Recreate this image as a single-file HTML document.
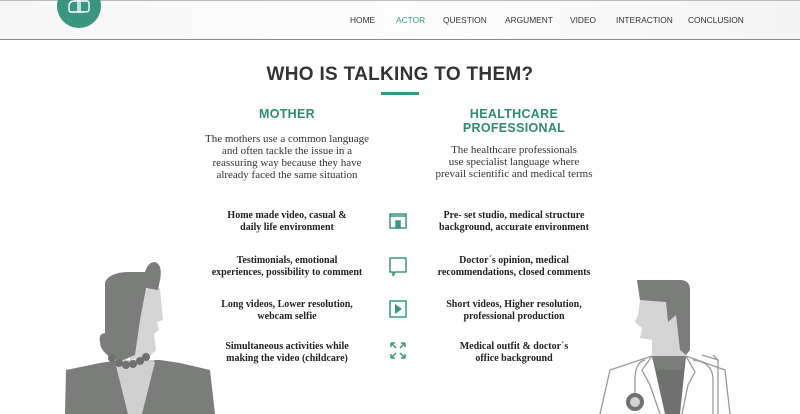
<!DOCTYPE html>
<html><head><meta charset="utf-8"><style>
*{margin:0;padding:0;box-sizing:border-box}
body{width:800px;height:414px;overflow:hidden;background:#fff;position:relative;font-family:"Liberation Serif",serif}
.hdr{position:absolute;left:0;top:0;width:800px;height:40px;background:linear-gradient(90deg,#f6f6f6,#fdfdfd 50%,#f4f4f4);border-bottom:1px solid #8a8a8a;border-top:1px solid #bbb}
.logo{position:absolute;left:57px;top:-17px;width:44px;height:44px;border-radius:50%;background:#3a9680}
.nav{position:absolute;top:14px;font:8.4px "Liberation Sans",sans-serif;color:#333}
.t{position:absolute;text-align:center;white-space:nowrap}
h1{position:absolute;left:0;width:800px;top:64px;text-align:center;font:bold 19px "Liberation Sans",sans-serif;color:#333;letter-spacing:.3px}
.gh{font:bold 12.5px "Liberation Sans",sans-serif;color:#2e8b72;line-height:14px;letter-spacing:.3px}
.p{font-size:11px;line-height:12px;color:#333}
.r{font-size:10px;font-weight:bold;line-height:12px;color:#222}
</style></head><body>
<div class="hdr">
<div class="logo"><svg width="44" height="44" viewBox="0 0 44 44"><g fill="none" stroke="#fff" stroke-width="1.4"><path d="M12 22 Q12 17 18 17 L23 17 L23 28 L14 28 Q12 28 12 26Z"/><path d="M21 17 L30 17 Q32 17 32 20 L32 26 Q32 28 26 28 L21 28Z"/></g></svg></div>
<div class="nav" style="left:350px">HOME</div>
<div class="nav" style="left:396px;color:#3a9680">ACTOR</div>
<div class="nav" style="left:443px">QUESTION</div>
<div class="nav" style="left:505px">ARGUMENT</div>
<div class="nav" style="left:570px">VIDEO</div>
<div class="nav" style="left:616px">INTERACTION</div>
<div class="nav" style="left:688px">CONCLUSION</div>
</div>
<h1>WHO IS TALKING TO THEM?</h1>
<div style="position:absolute;left:381px;top:92px;width:38px;height:3px;background:#3a9680"></div>
<div class="t gh" style="left:187px;width:200px;top:107px">MOTHER</div>
<div class="t gh" style="left:414px;width:200px;top:107px">HEALTHCARE<br>PROFESSIONAL</div>
<div class="t p" style="left:187px;width:200px;top:133px">The mothers use a common language<br>and often tackle the issue in a<br>reassuring way because they have<br>already faced the same situation</div>
<div class="t p" style="left:414px;width:200px;top:144px">The healthcare professionals<br>use specialist language where<br>prevail scientific and medical terms</div>

<div class="t r" style="left:187px;width:200px;top:210px">Home made video, casual &amp;<br>daily life environment</div>
<div class="t r" style="left:414px;width:200px;top:210px">Pre- set studio, medical structure<br>background, accurate environment</div>
<div class="t r" style="left:187px;width:200px;top:255px">Testimonials, emotional<br>experiences, possibility to comment</div>
<div class="t r" style="left:414px;width:200px;top:255px">Doctor´s opinion, medical<br>recommendations, closed comments</div>
<div class="t r" style="left:187px;width:200px;top:299px">Long videos, Lower resolution,<br>webcam selfie</div>
<div class="t r" style="left:414px;width:200px;top:299px">Short videos, Higher resolution,<br>professional production</div>
<div class="t r" style="left:187px;width:200px;top:341px">Simultaneous activities while<br>making the video (childcare)</div>
<div class="t r" style="left:414px;width:200px;top:341px">Medical outfit &amp; doctor´s<br>office background</div>

<svg style="position:absolute;left:388px;top:210px" width="22" height="170" viewBox="0 0 22 170" fill="none" stroke="#3a9680" stroke-width="1.5">
<rect x="2" y="4" width="16" height="14"/><line x1="2" y1="6" x2="18" y2="6"/><rect x="8" y="11" width="4" height="7" fill="#3a9680"/>
<path d="M2 48 H18 V62 H7 L5 66 V62 H2Z"/>
<rect x="2" y="91" width="16" height="16"/><path d="M7 94 L14 99 L7 104Z" fill="#3a9680" stroke="none"/>
<path d="M3 133 L8 138 M3 133 H7 M3 133 V137 M17 133 L12 138 M17 133 H13 M17 133 V137 M3 148 L8 143 M3 148 H7 M3 148 V144 M17 148 L12 143 M17 148 H13 M17 148 V144"/>
</svg>

<svg style="position:absolute;left:60px;top:260px" width="160" height="154" viewBox="0 0 160 154">
<path d="M5 154 L6 110 L40 103 L60 100 L100 100 L120 103 L150 110 L155 154Z" fill="#7b7d7b"/>
<path d="M55 100 Q65 112 75 108 Q85 112 95 100Z" fill="#c8c8c8"/>
<path d="M55 102 L68 154 L82 154 L95 102Z" fill="#d0d0d0"/>
<path d="M65 30 L100 28 L103 60 L97 62 L99 70 L94 74 L96 90 L88 98 L70 100Z" fill="#d4d4d4"/>
<path d="M45 22 Q50 12 70 12 L85 12 Q88 2 95 2 Q103 5 100 20 L98 30 L86 28 L80 60 L75 95 L68 98 Q60 103 50 97 Q40 90 40 82 Q38 74 45 73Z" fill="#7b7d7b"/>
<g fill="#6f716f"><circle cx="52" cy="98" r="4"/><circle cx="59" cy="103" r="4"/><circle cx="66" cy="105" r="4"/><circle cx="73" cy="104" r="4"/><circle cx="80" cy="101" r="4"/><circle cx="86" cy="97" r="4"/></g>
</svg>

<svg style="position:absolute;left:580px;top:260px" width="160" height="154" viewBox="0 0 160 154" fill="none">
<path d="M60 40 L88 40 L105 45 L106 100 L72 100 L72 80 L60 78 L62 68 L55 62 L58 55Z" fill="#d4d4d4"/>
<path d="M57 20 L100 20 Q110 20 110 30 L110 90 L106 95 L100 90 L96 55 L88 62 L86 42 L60 40Z" fill="#7b7d7b"/>
<path d="M72 96 L106 96 L100 154 L85 154Z" fill="#707270"/>
<path d="M72 96 L106 96 L102 110 L78 110Z" fill="#7b7d7b"/>
<g stroke="#9a9a9a" stroke-width="1.3">
<path d="M72 96 L30 110 L20 154 M106 96 L145 110 L150 154"/>
<path d="M72 96 L62 110 L70 125 L80 154 M106 96 L115 112 L108 125 L102 154"/>
<path d="M65 100 Q55 102 55 120 L55 138"/>
<path d="M113 100 Q133 102 133 120 L133 154 M122 95 L138 100 L138 154 M133 95 L138 100"/>
</g>
<circle cx="55" cy="142" r="7" stroke="#707270" stroke-width="4" fill="#d4d4d4"/>
</svg>
</body></html>
